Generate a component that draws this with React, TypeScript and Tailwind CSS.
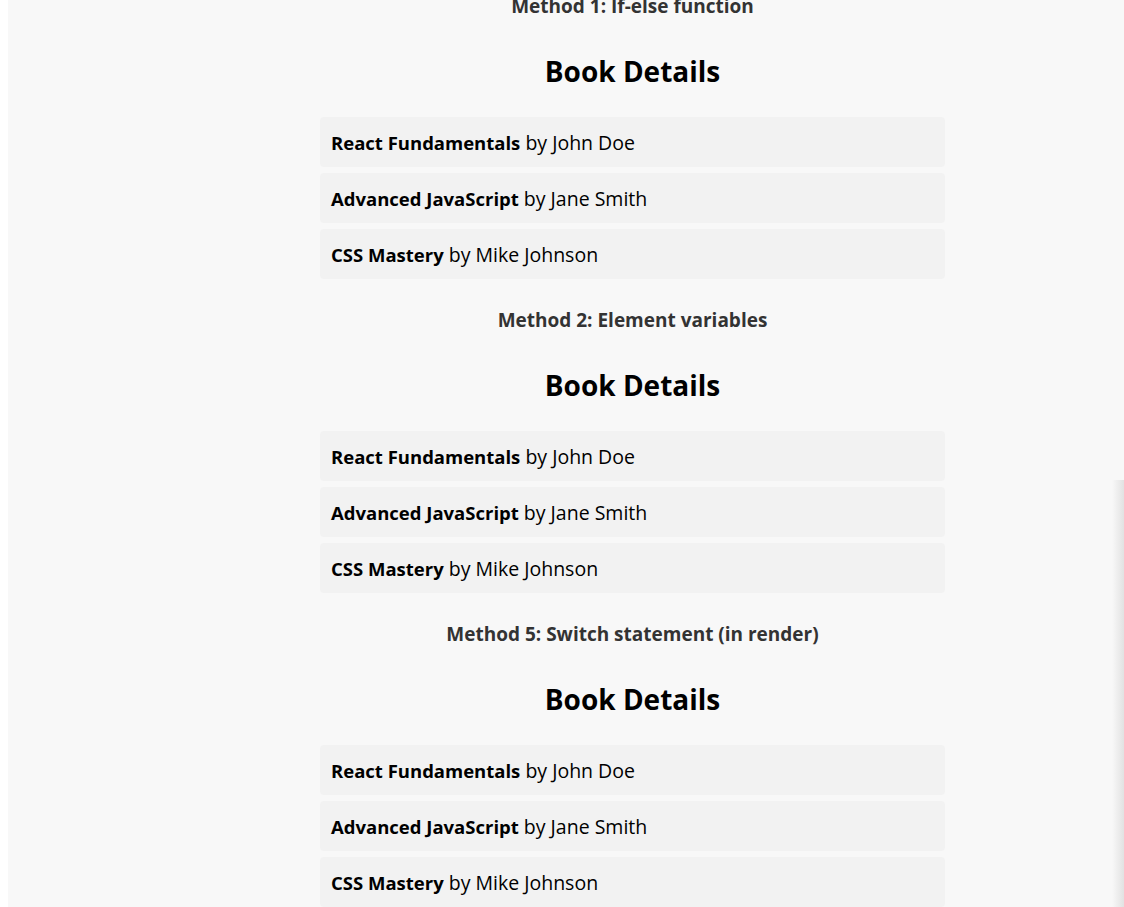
const books = [
  { title: "React Fundamentals", author: "John Doe" },
  { title: "Advanced JavaScript", author: "Jane Smith" },
  { title: "CSS Mastery", author: "Mike Johnson" },
];

const methods = [
  "Method 1: If-else function",
  "Method 2: Element variables",
  "Method 5: Switch statement (in render)",
];

function BookList() {
  return (
    <div className="flex flex-col">
      <h2 className="text-center text-[28px] leading-[34px] font-bold text-black">Book Details</h2>
      <ul className="mt-[29px] flex flex-col gap-[6px]">
        {books.map((b) => (
          <li key={b.title} className="h-[50px] flex items-center rounded-[4px] bg-[#f2f2f2] px-[11px] pt-[2px] text-black">
            <strong className="text-[18.5px] font-bold">{b.title}</strong>
            <span className="text-[19.5px]">&nbsp;by {b.author}</span>
          </li>
        ))}
      </ul>
    </div>
  );
}

export default function App() {
  return (
    <div className="relative flex h-[907px] overflow-hidden bg-white font-['Open_Sans',sans-serif]">
      <div className="w-[8px] shrink-0 bg-white" />
      <main className="flex-1 bg-[#f8f8f8] pl-[312px]">
        <div className="-mt-[6px] flex w-[625px] flex-col gap-[29px]">
          {methods.map((m) => (
            <section key={m} className="flex flex-col gap-[36px]">
              <p className="text-center text-[19px] leading-[24px] font-bold text-[#333]">{m}</p>
              <BookList />
            </section>
          ))}
        </div>
      </main>
      <div className="pointer-events-none absolute right-0 top-[480px] bottom-0 w-[12px] bg-gradient-to-r from-transparent to-[#e2e2e2]" />
    </div>
  );
}
